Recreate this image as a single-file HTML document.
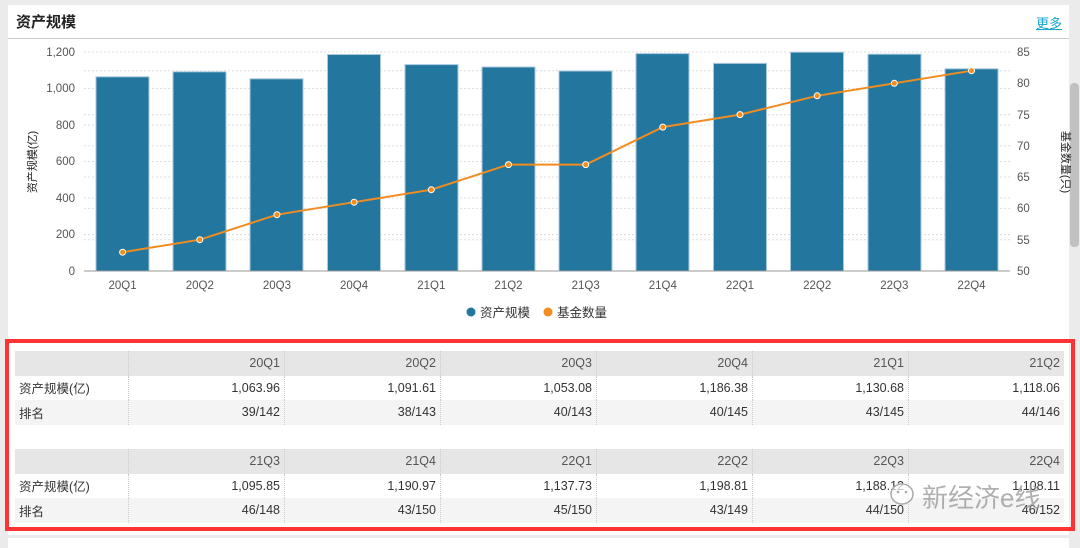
<!DOCTYPE html>
<html><head><meta charset="utf-8"><style>
body{margin:0;width:1080px;height:544px;background:#ebebeb;font-family:"Liberation Sans","Noto Sans CJK SC",sans-serif;position:relative;overflow:hidden}
.card{position:absolute;left:8px;top:5px;width:1061px;height:530px;background:#fff}
.title{position:absolute;left:16px;top:11px;font-size:15px;font-weight:bold;color:#222}
.more{position:absolute;left:1036px;top:13px;font-size:13px;color:#1aa3d0;text-decoration:underline}
.hr{position:absolute;left:8px;top:38px;width:1061px;height:1px;background:#ccc}
.sb{position:absolute;left:1070px;top:83px;width:9px;height:164px;background:#c1c1c1;border-radius:4px}
.card2{position:absolute;left:8px;top:538px;width:1061px;height:10px;background:#fff}
.red{position:absolute;left:5px;top:339px;width:1062px;height:184px;border:4px solid #f33}
table{position:absolute;left:15px;border-collapse:collapse;font-size:12.5px;color:#333}
td{height:24.5px;padding:0 4px;text-align:right;border-left:1px dotted #ccc;width:147px}
td:first-child{text-align:left;width:105px;border-left:none}
tr.h td{background:#e6e6e6;color:#555}
tr.g td{background:#f4f4f4}
.wm{position:absolute;left:922px;top:478px;font-size:26px;color:rgba(150,150,150,.75)}
</style></head><body>
<div class="card"></div>
<div class="title">资产规模</div>
<div class="more">更多</div>
<div class="hr"></div>
<div class="sb"></div>
<div class="card2"></div>
<svg style="position:absolute;left:0;top:0" width="1080" height="330" font-family="Liberation Sans, Noto Sans CJK SC, sans-serif" font-size="11.5" fill="#555">
<g stroke="#ddd" stroke-dasharray="2,2">
<line x1="84" x2="1010" y1="52" y2="52"/><line x1="84" x2="1010" y1="70.8" y2="70.8"/><line x1="84" x2="1010" y1="88.5" y2="88.5"/><line x1="84" x2="1010" y1="114.6" y2="114.6"/><line x1="84" x2="1010" y1="125" y2="125"/><line x1="84" x2="1010" y1="145.8" y2="145.8"/><line x1="84" x2="1010" y1="161.5" y2="161.5"/><line x1="84" x2="1010" y1="177" y2="177"/><line x1="84" x2="1010" y1="198" y2="198"/><line x1="84" x2="1010" y1="208.4" y2="208.4"/><line x1="84" x2="1010" y1="234.5" y2="234.5"/><line x1="84" x2="1010" y1="239.7" y2="239.7"/>
</g>
<g fill="#23779f" stroke="#a9c8dc" stroke-width="1">
<rect x="96" y="76.8" width="53" height="194.2"/><rect x="173" y="71.8" width="53" height="199.2"/><rect x="250" y="78.8" width="53" height="192.2"/><rect x="327.5" y="54.5" width="53" height="216.5"/><rect x="405" y="64.6" width="53" height="206.4"/><rect x="482" y="67" width="53" height="204"/><rect x="559" y="71" width="53" height="200"/><rect x="636" y="53.6" width="53" height="217.4"/><rect x="713.5" y="63.4" width="53" height="207.6"/><rect x="790.5" y="52.2" width="53" height="218.8"/><rect x="868" y="54.2" width="53" height="216.8"/><rect x="945" y="68.8" width="53" height="202.2"/>
</g>
<line x1="84" x2="1010" y1="271" y2="271" stroke="#999"/>
<polyline fill="none" stroke="#f28c1e" stroke-width="2" points="122.6,252.2 199.8,239.7 276.9,214.7 354.1,202.2 431.3,189.7 508.5,164.6 585.7,164.6 662.8,127.1 740,114.6 817.2,95.8 894.3,83.3 971.5,70.7"/>
<g fill="#f28c1e" stroke="#fff" stroke-width="1"><circle cx="122.6" cy="252.2" r="3"/><circle cx="199.8" cy="239.7" r="3"/><circle cx="276.9" cy="214.7" r="3"/><circle cx="354.1" cy="202.2" r="3"/><circle cx="431.3" cy="189.7" r="3"/><circle cx="508.5" cy="164.6" r="3"/><circle cx="585.7" cy="164.6" r="3"/><circle cx="662.8" cy="127.1" r="3"/><circle cx="740" cy="114.6" r="3"/><circle cx="817.2" cy="95.8" r="3"/><circle cx="894.3" cy="83.3" r="3"/><circle cx="971.5" cy="70.7" r="3"/></g>
<g text-anchor="end"><text x="75" y="56">1,200</text><text x="75" y="92">1,000</text><text x="75" y="129">800</text><text x="75" y="165">600</text><text x="75" y="202">400</text><text x="75" y="238">200</text><text x="75" y="275">0</text></g>
<g><text x="1017" y="56">85</text><text x="1017" y="87">80</text><text x="1017" y="119">75</text><text x="1017" y="150">70</text><text x="1017" y="181">65</text><text x="1017" y="212">60</text><text x="1017" y="244">55</text><text x="1017" y="275">50</text></g>
<g text-anchor="middle"><text x="122.6" y="289">20Q1</text><text x="199.8" y="289">20Q2</text><text x="276.9" y="289">20Q3</text><text x="354.1" y="289">20Q4</text><text x="431.3" y="289">21Q1</text><text x="508.5" y="289">21Q2</text><text x="585.7" y="289">21Q3</text><text x="662.8" y="289">21Q4</text><text x="740" y="289">22Q1</text><text x="817.2" y="289">22Q2</text><text x="894.3" y="289">22Q3</text><text x="971.5" y="289">22Q4</text></g>
<text transform="translate(36,162) rotate(-90)" text-anchor="middle" fill="#222" font-size="11">资产规模(亿)</text>
<text transform="translate(1062,162) rotate(90)" text-anchor="middle" fill="#222" font-size="11">基金数量(只)</text>
<circle cx="471" cy="312" r="4.5" fill="#23779f"/><text x="480" y="317" font-size="12.5" fill="#333">资产规模</text>
<circle cx="548" cy="312" r="4.5" fill="#f28c1e"/><text x="557" y="317" font-size="12.5" fill="#333">基金数量</text>
</svg>
<div class="red"></div>
<table style="top:351px">
<tr class="h"><td></td><td>20Q1</td><td>20Q2</td><td>20Q3</td><td>20Q4</td><td>21Q1</td><td>21Q2</td></tr>
<tr><td>资产规模(亿)</td><td>1,063.96</td><td>1,091.61</td><td>1,053.08</td><td>1,186.38</td><td>1,130.68</td><td>1,118.06</td></tr>
<tr class="g"><td>排名</td><td>39/142</td><td>38/143</td><td>40/143</td><td>40/145</td><td>43/145</td><td>44/146</td></tr>
</table>
<table style="top:449px">
<tr class="h"><td></td><td>21Q3</td><td>21Q4</td><td>22Q1</td><td>22Q2</td><td>22Q3</td><td>22Q4</td></tr>
<tr><td>资产规模(亿)</td><td>1,095.85</td><td>1,190.97</td><td>1,137.73</td><td>1,198.81</td><td>1,188.12</td><td>1,108.11</td></tr>
<tr class="g"><td>排名</td><td>46/148</td><td>43/150</td><td>45/150</td><td>43/149</td><td>44/150</td><td>46/152</td></tr>
</table>
<svg style="position:absolute;left:889px;top:481px" width="30" height="28"><ellipse cx="13" cy="13" rx="11" ry="10" fill="rgba(255,255,255,.7)" stroke="#aaa" stroke-width="1.5"/><circle cx="9" cy="11" r="1.3" fill="#aaa"/><circle cx="17" cy="11" r="1.3" fill="#aaa"/></svg>
<div class="wm">新经济e线</div>
</body></html>
